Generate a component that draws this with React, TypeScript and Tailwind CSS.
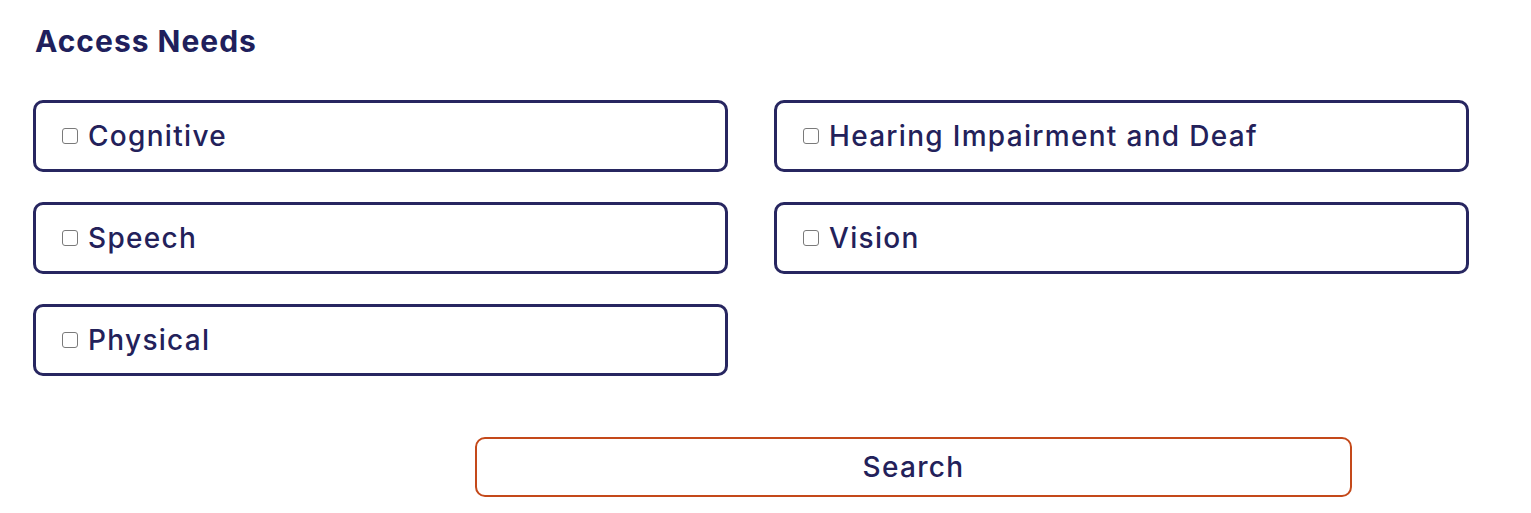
const options = ['Cognitive', 'Hearing Impairment and Deaf', 'Speech', 'Vision', 'Physical'];

function Option({ label }: { label: string }) {
  return (
    <label className="flex h-[72px] items-center rounded-[10px] border-[3px] border-[#272660] bg-white pl-[26px]">
      <span className="mr-[10px] h-[16px] w-[16px] rounded-[3px] border border-[#7a7a7a] bg-white" />
      <span className="text-[28px] font-medium tracking-[1.3px] text-[#23215a]">{label}</span>
    </label>
  );
}

export default function App() {
  return (
    <div className="min-h-[513px] bg-white pl-[33px] pt-[21px] font-['Inter',sans-serif]">
      <h2 className="pl-[2px] text-[30px] font-bold leading-[40px] tracking-[1px] text-[#201f5c]">Access Needs</h2>
      <div className="mt-[39px] grid w-[1436px] grid-cols-2 gap-x-[46px] gap-y-[30px]">
        {options.map((o) => (
          <Option key={o} label={o} />
        ))}
      </div>
      <div className="mt-[61px] pl-[442px]">
        <button className="h-[60px] w-[877px] rounded-[10px] border-2 border-[#c4491a] bg-white text-[28px] font-medium tracking-[1.3px] text-[#23215a]">
          Search
        </button>
      </div>
    </div>
  );
}
